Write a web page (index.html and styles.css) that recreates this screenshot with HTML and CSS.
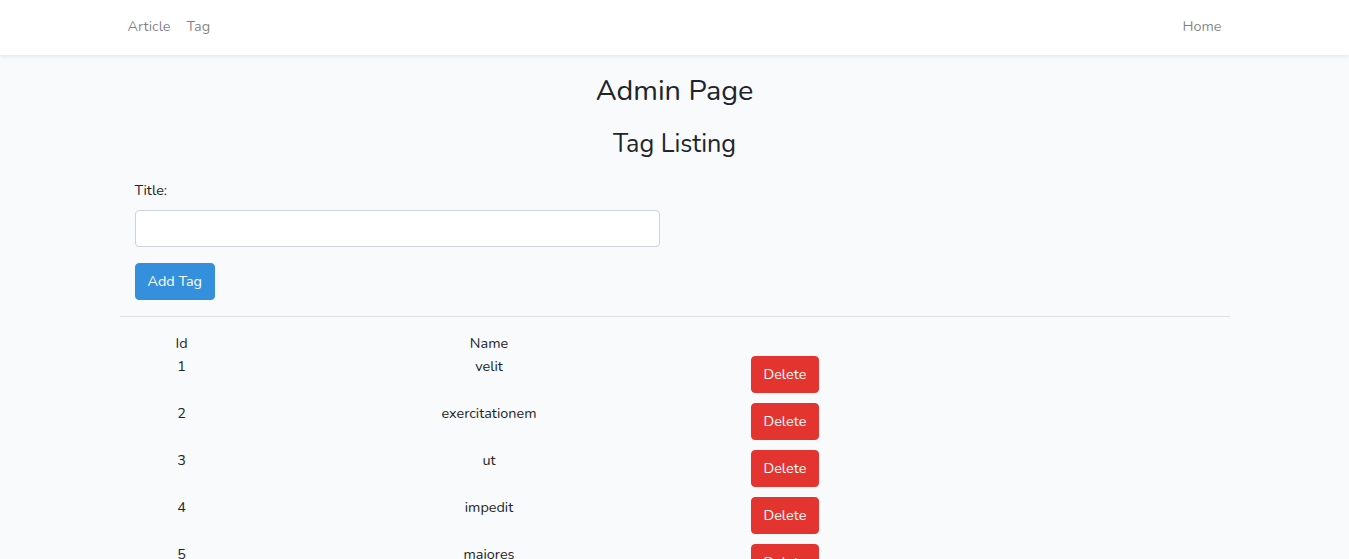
FILE: index.html
```html
<!DOCTYPE html>
<html lang="en">
<head>
<meta charset="utf-8">
<title>Admin Page</title>
<link rel="stylesheet" href="styles.css">
</head>
<body>
<nav class="navbar">
  <div class="nav-inner">
    <ul class="nav-list">
      <li><a class="nav-link" href="#">Article</a></li>
      <li><a class="nav-link" href="#">Tag</a></li>
    </ul>
    <ul class="nav-list">
      <li><a class="nav-link" href="#">Home</a></li>
    </ul>
  </div>
</nav>
<main class="content">
  <div class="container">
    <h2 class="page-title">Admin Page</h2>
    <h3 class="section-title">Tag Listing</h3>
    <form class="tag-form">
      <label class="form-label" for="title">Title:</label>
      <input class="form-control" id="title" type="text">
      <button class="btn btn-primary" type="button">Add Tag</button>
    </form>
    <hr class="divider">
    <table class="tag-table">
      <colgroup>
        <col class="col-id"><col class="col-name"><col class="col-action">
      </colgroup>
      <thead>
        <tr class="head-row"><th>Id</th><th>Name</th><th></th></tr>
      </thead>
      <tbody>
        <tr><td>1</td><td>velit</td><td class="action"><button class="btn btn-danger" type="button">Delete</button></td></tr>
        <tr><td>2</td><td>exercitationem</td><td class="action"><button class="btn btn-danger" type="button">Delete</button></td></tr>
        <tr><td>3</td><td>ut</td><td class="action"><button class="btn btn-danger" type="button">Delete</button></td></tr>
        <tr><td>4</td><td>impedit</td><td class="action"><button class="btn btn-danger" type="button">Delete</button></td></tr>
        <tr><td>5</td><td>maiores</td><td class="action"><button class="btn btn-danger" type="button">Delete</button></td></tr>
      </tbody>
    </table>
  </div>
</main>
</body>
</html>
```
FILE: styles.css
```css
* { box-sizing: border-box; }
html, body { margin: 0; }
body {
  font-family: "Nunito", "Lato", "Noto Sans", sans-serif;
  font-size: 14.4px;
  line-height: 1.5;
  color: #212529;
  background: #f8fafc;
}
.navbar {
  background: #fff;
  box-shadow: 0 2px 4px rgba(0,0,0,0.075);
  height: 55px;
  display: flex;
  align-items: center;
  padding-bottom: 1px;
}
.nav-inner {
  width: 1140px;
  margin: 0 auto;
  padding: 0 15px;
  display: flex;
  justify-content: space-between;
}
.nav-list {
  list-style: none;
  margin: 0;
  padding: 0;
  display: flex;
}
.nav-link {
  display: block;
  padding: 8px;
  color: rgba(0,0,0,0.5);
  text-decoration: none;
}
.content { padding-top: 19px; }
.container {
  width: 1140px;
  margin: 0 auto;
  padding: 0 15px;
}
.page-title {
  font-size: 28.8px;
  font-weight: 400;
  line-height: 1.2;
  text-align: center;
  margin: 0 0 8px;
}
.section-title {
  font-size: 25.2px;
  font-weight: 400;
  line-height: 1.2;
  text-align: center;
  margin: 20px 0 21px;
}
.tag-form {
  padding: 0 15px;
  display: flex;
  flex-direction: column;
  align-items: flex-start;
}
.form-label { margin-bottom: 9px; }
.form-control {
  width: 525px;
  height: 37px;
  padding: 6px 12px;
  border: 1px solid #ced4da;
  border-radius: 4px;
  background: #fff;
  font: inherit;
  margin-bottom: 16px;
}
.btn {
  font: inherit;
  line-height: 1.6;
  height: 37px;
  padding: 6px 12px;
  border: 1px solid transparent;
  border-radius: 4px;
  color: #fff;
  cursor: pointer;
}
.btn-primary { background: #3490dc; border-color: #3490dc; }
.btn-danger { background: #e3342f; border-color: #e3342f; }
.divider {
  border: 0;
  border-top: 1px solid rgba(0,0,0,0.1);
  margin: 16px 0;
}
.tag-table {
  border-collapse: collapse;
  table-layout: fixed;
  margin-left: 16px;
}
.col-id { width: 92px; }
.col-name { width: 523px; }
.col-action { width: 80px; }
.tag-table th, .tag-table td {
  padding: 0;
  text-align: center;
  vertical-align: top;
  font-weight: 400;
}
.head-row th { padding-bottom: 1px; }
.tag-table td.action { text-align: left; }
.btn-danger { margin-bottom: 10px; }
```
